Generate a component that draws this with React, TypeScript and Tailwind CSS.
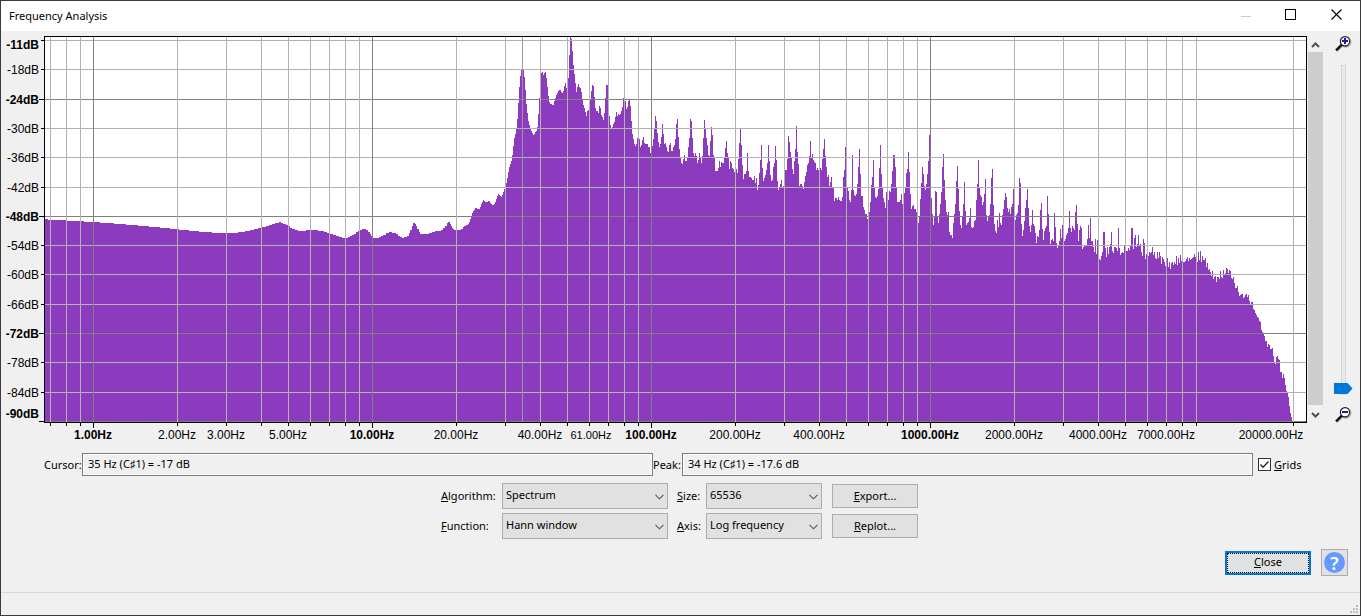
import { useState } from "react";
import type { ReactNode } from "react";

// Spectrum outline: each row is a start column followed by the top edge of
// the bars. Sparse rows are "column:top" pairs, dense rows one top per column.
const LOW_BAND = `
45:219 48:220 66:221 84:222 100:223 114:224 126:225 138:226 149:227 160:228 170:229 179:230
189:231 199:232 212:233 238:232 245:231 250:230 254:229 258:228 262:227 266:226 269:225
272:224 275:223 279:222 281:223 283:224 286:225 288:226 290:228 292:229 295:230 298:231
306:230 318:231 324:232 327:233 330:234 333:235 336:236 339:237 342:238 348:237 350:236
352:235 354:234 356:232 358:231 360:230 362:229 366:230 368:232 370:234 371:236 373:238
379:237 381:236 383:235 386:233 389:232 392:233 396:234 398:236 400:237 402:238 404:237
407:236 409:233 410:230 412:226 413:223 415:224 416:226 417:229 419:232 420:234 429:233
432:232 435:231 441:230 443:228 445:226 447:223 448:222
`;

const HIGH_BAND = `
450 224 226 228 229 230 230 230 230 230 230
460 230 229 229 227 226 226 225 225 224 222
470 219 216 213 211 210 208 208 209 209 209
480 207 204 202 200 201 202 202 202 201 201
490 203 204 205 205 204 202 199 196 194 195
500 196 197 195 192 189 187 183 178 172 167
510 164 161 155 146 138 134 128 119 103 87
520 76 70 70 70 77 90 104 113 121 125
530 128 131 133 135 134 132 131 127 114 98
540 98 73 72 75 73 72 78 87 96 102
550 104 104 105 105 101 98 95 93 91 90
560 90 92 93 91 86 83 88 88 78 55
570 37 39 51 65 74 83 92 87 84 87
580 88 92 99 105 108 112 116 111 110 110
590 99 91 85 86 97 108 111 111 113 106
600 108 115 117 120 113 98 85 85 99 116
610 125 128 127 124 122 117 112 116 114 115
620 114 111 107 98 101 101 109 107 101 100
630 106 121 134 139 144 146 144 138 138 139
640 147 145 140 137 143 144 144 144 147 147
650 153 152 146 139 128 116 121 133 142 147
660 144 137 124 134 144 143 147 151 152 145
670 143 151 151 147 145 139 124 119 137 149
680 157 163 164 159 155 161 161 157 147 138
690 119 121 138 153 156 153 156 163 160 153
700 158 163 156 138 120 129 138 145 155 156
710 141 127 135 155 158 171 171 171 168 161
720 167 162 163 163 158 148 141 153 158 169
730 161 163 168 169 172 172 169 173 159 143
740 129 145 165 179 174 174 171 153 171 177
750 177 178 180 180 176 183 178 190 185 173
760 160 145 168 181 178 175 170 163 145 161
770 175 181 180 167 163 146 160 181 190 188
780 184 180 187 186 186 170 170 159 136 142
790 152 158 169 174 161 149 126 152 164 186
800 184 184 186 189 182 176 172 165 163 156
810 141 157 154 160 162 163 170 168 170 170
820 168 170 159 149 139 156 167 177 175 186
830 182 177 188 188 201 198 198 200 197 200
840 201 201 197 177 170 147 188 188 191 200
850 202 190 155 190 195 196 194 184 167 149
860 174 196 196 207 210 214 214 219 220 212
870 202 185 177 160 188 197 198 196 189 168
880 145 174 188 198 202 208 192 192 200 191
890 192 184 171 155 155 167 188 202 202 202
900 200 194 204 204 193 188 173 169 152 172
910 194 209 206 205 209 209 212 216 223 216
920 199 183 167 174 186 190 184 174 161 135
930 135 198 214 225 216 191 192 216 223 214
940 204 192 167 154 180 200 212 215 212 232
950 235 235 238 223 214 204 181 166 189 211
960 225 228 216 204 182 211 225 223 222 218
970 208 227 228 227 221 220 200 184 160 188
980 195 197 205 202 194 179 215 221 216 215
990 204 178 169 205 224 231 233 220 227 213
1000 223 225 215 209 200 193 197 208 212 209
1010 214 207 204 189 220 220 215 213 205 178
1020 183 224 236 230 221 208 200 189 208 226
1030 232 225 210 224 226 233 243 236 237 230
1040 210 203 229 240 231 228 226 196 214 232
1050 244 240 239 241 213 227 243 248 246 241
1060 229 238 225 241 241 239 235 233 228 211
1070 228 232 226 228 230 212 205 224 241 230
1080 226 228 249 247 246 246 246 239 225 238
1090 218 241 241 247 252 239 254 240 259 259
1100 260 256 252 232 232 248 257 247 254 247
1110 244 232 251 253 247 247 248 251 228 248
1120 255 253 252 253 246 246 251 251 248 250
1130 246 228 228 249 238 235 247 244 235 245
1140 244 252 256 239 243 259 254 254 256 252
1150 253 252 247 255 252 258 259 252 258 252
1160 256 264 257 259 262 266 266 258 267 262
1170 269 263 262 265 262 264 256 265 258 263
1180 255 261 262 262 262 261 259 257 261 258
1190 260 259 258 257 254 257 262 262 252 260
1200 251 262 256 260 260 258 267 263 270 269
1210 272 276 271 279 277 276 282 277 277 279
1220 271 277 278 270 274 273 268 269 273 270
1230 271 278 279 277 283 288 288 286 292 296
1240 295 294 294 298 297 295 294 297 295 301
1250 304 302 302 309 310 313 315 317 318 321
1260 322 330 332 333 336 341 341 347 344 345
1270 349 349 348 356 363 364 357 356 359 360
1280 372 372 378 374 378 385 391 393 397 406
1290 413 417
`;

const LEFT = 44;
const TOP = 36;
const WIDTH = 1263;
const HEIGHT = 387;

function buildPath() {
  let d = `M45 421`;
  for (const pair of LOW_BAND.trim().split(/\s+/)) {
    const [x, y] = pair.split(":");
    d += `H${x}V${y}`;
  }
  for (const row of HIGH_BAND.trim().split("\n")) {
    const [start, ...tops] = row.split(" ").map(Number);
    tops.forEach((y, i) => {
      d += `H${start + i}V${y}`;
    });
  }
  return d + "H1292V421Z";
}

const SPECTRUM = buildPath();

const freqX = (hz: number) => Math.round(93 + 279.05 * Math.log10(hz));

const FREQS = [
  0.7, 0.8, 0.9, 1, 2, 3, 4, 5, 6, 7, 8, 9, 10, 20, 30, 40, 50, 60, 70, 80, 90,
  100, 200, 300, 400, 500, 600, 700, 800, 900, 1000, 2000, 3000, 4000, 5000,
  6000, 7000, 8000, 9000, 20000,
];
const DECADES = [1, 10, 100, 1000];

const FREQ_LABELS = [
  { hz: 1, at: 93 },
  { hz: 2, at: 177 },
  { hz: 3, at: 226 },
  { hz: 5, at: 288 },
  { hz: 10, at: 372 },
  { hz: 20, at: 456 },
  { hz: 40, at: 540 },
  { hz: 61, at: 591, small: true },
  { hz: 100, at: 651 },
  { hz: 200, at: 735 },
  { hz: 400, at: 819 },
  { hz: 1000, at: 930 },
  { hz: 2000, at: 1014 },
  { hz: 4000, at: 1098 },
  { hz: 7000, at: 1166 },
  { hz: 20000, at: 1271 },
];

const LEVELS = [
  { label: "-11dB", y: 40, text: 45, bold: true, dark: false },
  { label: "-18dB", y: 69, text: 70, bold: false, dark: false },
  { label: "-24dB", y: 99, text: 100, bold: true, dark: true },
  { label: "-30dB", y: 128, text: 129, bold: false, dark: false },
  { label: "-36dB", y: 157, text: 158, bold: false, dark: false },
  { label: "-42dB", y: 187, text: 188, bold: false, dark: false },
  { label: "-48dB", y: 216, text: 217, bold: true, dark: true },
  { label: "-54dB", y: 245, text: 246, bold: false, dark: false },
  { label: "-60dB", y: 274, text: 275, bold: false, dark: false },
  { label: "-66dB", y: 304, text: 305, bold: false, dark: false },
  { label: "-72dB", y: 333, text: 334, bold: true, dark: true },
  { label: "-78dB", y: 362, text: 363, bold: false, dark: false },
  { label: "-84dB", y: 392, text: 393, bold: false, dark: false },
  { label: "-90dB", y: 421, text: 414, bold: true, dark: true },
];

function LevelAxis() {
  return (
    <svg className="h-[409px] w-[43px] shrink-0 font-['Liberation_Sans',sans-serif] text-[12px]">
      {LEVELS.map((l) => (
        <g key={l.label}>
          <text x="38" y={l.text - TOP + 4} textAnchor="end" fontWeight={l.bold ? 700 : 400}>
            {l.label}
          </text>
          <rect x={l.dark ? 38 : 40} y={l.y - TOP} width={l.dark ? 5 : 3} height="1" />
        </g>
      ))}
    </svg>
  );
}

function Plot({ grids }: { grids: boolean }) {
  return (
    <svg className="h-[409px] min-w-0 flex-1 overflow-visible font-['Liberation_Sans',sans-serif] text-[12px]">
      <svg
        width="100%"
        height="393"
        viewBox={`${LEFT} ${TOP} ${WIDTH} 393`}
        preserveAspectRatio="none"
        shapeRendering="crispEdges"
      >
        <rect x={LEFT} y={TOP} width={WIDTH} height={HEIGHT} fill="#000" />
        <rect x={LEFT + 1} y={TOP + 1} width={WIDTH - 2} height={HEIGHT - 2} fill="#fff" />
        <path d={SPECTRUM} fill="#8c3bbf" />
        {grids && (
          <g>
            {LEVELS.map((l) => (
              <rect key={l.y} x="45" y={l.y} width={WIDTH - 2} height="1" fill={l.dark ? "#7f7f7f" : "#b2b2b2"} />
            ))}
            {FREQS.map((hz) => (
              <rect
                key={hz}
                x={freqX(hz)}
                y="37"
                width="1"
                height={HEIGHT - 2}
                fill={DECADES.includes(hz) ? "#7f7f7f" : "#b2b2b2"}
              />
            ))}
          </g>
        )}
        <rect x="522" y="37" width="1" height={HEIGHT - 2} fill="#999" />
        {FREQS.map((hz) => (
          <rect key={hz} x={freqX(hz)} y="423" width="1" height={DECADES.includes(hz) ? 5 : 3} />
        ))}
      </svg>
      {FREQ_LABELS.map((f) => (
        <text
          key={f.hz}
          x={`${((f.at - LEFT) / WIDTH) * 100}%`}
          y="403"
          textAnchor="middle"
          fontSize={f.small ? 11 : 12}
          fontWeight={DECADES.includes(f.hz) ? 700 : 400}
        >
          {f.hz.toFixed(2)}Hz
        </text>
      ))}
    </svg>
  );
}

function Magnifier({ plus }: { plus?: boolean }) {
  return (
    <svg width="17" height="16" viewBox="0 0 17 16">
      <path d="M7.5 9.5 L2 15" stroke="#a8a8a8" strokeWidth="2" />
      <circle cx="10.8" cy="6" r="5" fill="none" stroke="#a8a8a8" strokeWidth="1.4" />
      <circle cx="10" cy="5.3" r="4.6" fill="#fff" stroke="#222" strokeWidth="1.2" />
      <path d="M6.8 8.6 L1 14.4" stroke="#111" strokeWidth="2.2" />
      <path d="M7 4h6v2H7z" fill="#1a1aa0" />
      {plus && <path d="M9 2h2v6H9z" fill="#1a1aa0" />}
    </svg>
  );
}

function Chevron({ up }: { up?: boolean }) {
  return (
    <svg width="9" height="6" viewBox="0 0 9 6" fill="none" stroke="#505050" strokeWidth="2">
      <path d={up ? "M1 5 L4.5 1.5 L8 5" : "M1 1 L4.5 4.5 L8 1"} />
    </svg>
  );
}

function ScrollBar() {
  return (
    <div className="ml-px flex h-[387px] w-[15px] shrink-0 flex-col">
      <button aria-label="Scroll up" className="flex h-4 items-center justify-center pt-0.5">
        <Chevron up />
      </button>
      <div className="flex-1 bg-[#cdcdcd]" />
      <button aria-label="Scroll down" className="flex h-[18px] items-center justify-center pt-0.5">
        <Chevron />
      </button>
    </div>
  );
}

function ZoomColumn() {
  return (
    <div className="flex h-[387px] w-[37px] shrink-0 flex-col items-center pl-[3px]">
      <Magnifier plus />
      <input
        type="range"
        aria-label="Vertical zoom"
        min="0"
        max="100"
        defaultValue="0"
        className="mt-[13px] h-[330px] w-[19px] appearance-none bg-transparent [direction:rtl] [writing-mode:vertical-lr] [&::-webkit-slider-runnable-track]:mx-auto [&::-webkit-slider-runnable-track]:w-[5px] [&::-webkit-slider-runnable-track]:border [&::-webkit-slider-runnable-track]:border-[#d6d6d6] [&::-webkit-slider-runnable-track]:bg-[#e7eaea] [&::-webkit-slider-thumb]:-ml-2 [&::-webkit-slider-thumb]:h-[11px] [&::-webkit-slider-thumb]:w-[19px] [&::-webkit-slider-thumb]:appearance-none [&::-webkit-slider-thumb]:bg-[#0078d7] [&::-webkit-slider-thumb]:[clip-path:polygon(0_0,74%_0,100%_50%,74%_100%,0_100%)]"
      />
      <div className="mt-3">
        <Magnifier />
      </div>
    </div>
  );
}

function Select({ id, options }: { id: string; options: string[] }) {
  return (
    <div className="relative">
      <select
        id={id}
        className="block h-[26px] w-full appearance-none border border-[#adadad] bg-[#e1e1e1] pb-0.5 pl-[3px] outline-none"
      >
        {options.map((o) => (
          <option key={o}>{o}</option>
        ))}
      </select>
      <svg
        className="pointer-events-none absolute top-[11px] right-1"
        width="9"
        height="6"
        viewBox="0 0 9 6"
        fill="none"
        stroke="#555"
        strokeWidth="1.1"
      >
        <path d="M.5 .8 L4.5 4.8 L8.5 .8" />
      </svg>
    </div>
  );
}

function PushButton({ children }: { children: ReactNode }) {
  return (
    <button className="ml-[10px] h-6 w-[86px] border border-[#adadad] bg-[#e1e1e1]">{children}</button>
  );
}

export default function App() {
  const [grids, setGrids] = useState(true);

  return (
    <div className="flex min-h-screen flex-col border border-[#3a3a3c] bg-[#f0f0f0] font-['Noto_Sans','Open_Sans',sans-serif] text-[11px] leading-4 text-black">
      <header className="flex h-[30px] items-center bg-white">
        <h1 className="flex-1 pl-2">Frequency Analysis</h1>
        <button aria-label="Minimize" className="flex h-full w-[45px] items-center justify-center">
          <span className="h-px w-[10px] bg-[#ccc]" />
        </button>
        <button aria-label="Maximize" className="flex h-full w-[45px] items-center justify-center pb-1">
          <span className="size-[11px] border border-black" />
        </button>
        <button aria-label="Close window" className="flex h-full w-[47px] items-center justify-center pb-1">
          <svg width="11" height="11" viewBox="0 0 11 11" stroke="#000" strokeWidth="1.1">
            <path d="M.5 .5 L10.5 10.5 M10.5 .5 L.5 10.5" />
          </svg>
        </button>
      </header>

      <main className="flex flex-1 flex-col">
        <div className="flex pt-[5px]">
          <LevelAxis />
          <Plot grids={grids} />
          <ScrollBar />
          <ZoomColumn />
        </div>

        <div className="mt-2 flex items-center pr-[58px] pl-[43px]">
          <label htmlFor="cursor" className="w-[38px]">
            Cursor:
          </label>
          <input
            id="cursor"
            readOnly
            value="35 Hz (C♯1) = -17 dB"
            className="h-[23px] min-w-0 flex-1 border border-[#7a7a7a] bg-[#f0f0f0] pb-0.5 pl-[5px] shadow-[inset_0_0_0_1px_#fff] outline-none"
          />
          <label htmlFor="peak" className="w-[29px]">
            Peak:
          </label>
          <input
            id="peak"
            readOnly
            value="34 Hz (C♯1) = -17.6 dB"
            className="h-[23px] min-w-0 flex-1 border border-[#7a7a7a] bg-[#f0f0f0] pb-0.5 pl-[5px] shadow-[inset_0_0_0_1px_#fff] outline-none"
          />
          <div className="ml-[5px] flex w-11 items-center">
            <span className="relative flex">
              <input
                id="grids"
                type="checkbox"
                checked={grids}
                onChange={(e) => setGrids(e.target.checked)}
                className="size-[13px] appearance-none border border-[#333] bg-white"
              />
              {grids && (
                <svg
                  className="pointer-events-none absolute top-0 left-0"
                  width="13"
                  height="13"
                  viewBox="0 0 13 13"
                  fill="none"
                  stroke="#222"
                  strokeWidth="1.3"
                >
                  <path d="M2.5 6.5 L5 9.2 L10.5 3.5" />
                </svg>
              )}
            </span>
            <label htmlFor="grids" className="pl-[3px]">
              <u>G</u>rids
            </label>
          </div>
        </div>

        <div className="mt-[7px] grid grid-cols-[61px_166px_38px_116px_96px] items-center justify-center gap-y-1 pr-0.5">
          <label htmlFor="algorithm">
            <u>A</u>lgorithm:
          </label>
          <Select id="algorithm" options={["Spectrum", "Standard Autocorrelation", "Cepstrum"]} />
          <label htmlFor="size" className="pl-[9px]">
            <u>S</u>ize:
          </label>
          <Select id="size" options={["65536", "32768", "16384"]} />
          <PushButton>
            <u>E</u>xport...
          </PushButton>
          <label htmlFor="function">
            <u>F</u>unction:
          </label>
          <Select id="function" options={["Hann window", "Hamming window"]} />
          <label htmlFor="axis" className="pl-[9px]">
            <u>A</u>xis:
          </label>
          <Select id="axis" options={["Log frequency", "Linear frequency"]} />
          <PushButton>
            <u>R</u>eplot...
          </PushButton>
        </div>

        <div className="mt-[10px] flex items-center justify-end gap-[10px] pr-3">
          <button className="h-6 w-[86px] border-2 border-[#0078d7] bg-[#e1e1e1]">
            <span className="flex h-full items-center justify-center border border-dotted border-black pb-0.5">
              <span>
                <u>C</u>lose
              </span>
            </span>
          </button>
          <button
            aria-label="Help"
            className="flex size-[27px] items-center justify-center border border-[#adadad] bg-[#e1e1e1]"
          >
            <span className="flex size-[21px] items-center justify-center rounded-full bg-[#6699ff] text-[18px] font-semibold text-white">
              ?
            </span>
          </button>
        </div>
      </main>

      <footer className="flex h-[23px] items-end justify-end border-t border-[#d7d7d7] pr-0.5 pb-0.5">
        <svg width="8" height="8" viewBox="0 0 8 8" fill="#bfbfbf">
          <path d="M6 0h2v2H6zM3 3h2v2H3zM6 3h2v2H6zM0 6h2v2H0zM3 6h2v2H3zM6 6h2v2H6z" />
        </svg>
      </footer>
    </div>
  );
}
